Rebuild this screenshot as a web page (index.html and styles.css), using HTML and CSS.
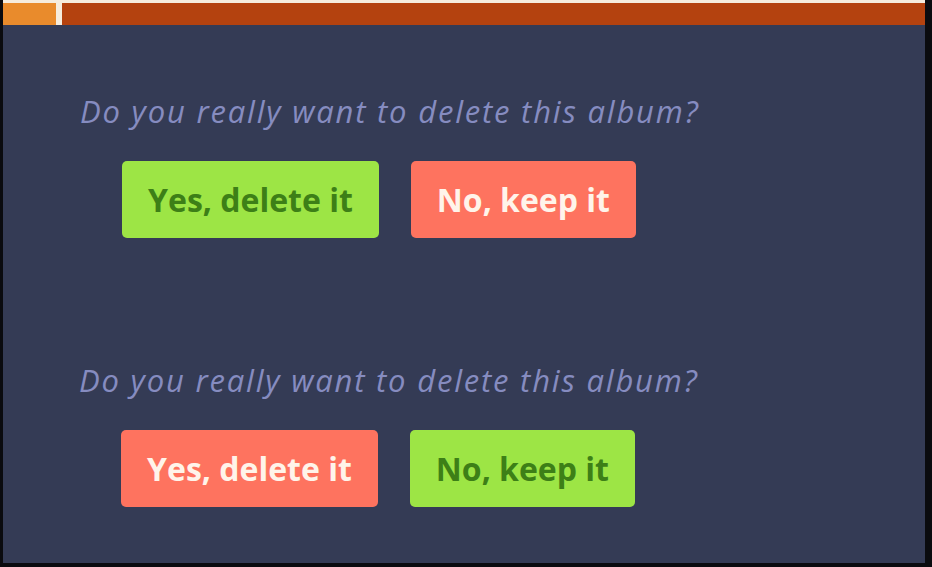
FILE: index.html
```html
<!DOCTYPE html>
<html>
<head>
<meta charset="utf-8">
<link rel="stylesheet" href="styles.css">
</head>
<body>
<div class="screen">
  <div class="topbar">
    <div class="seg seg-orange"></div>
    <div class="seg seg-brown"></div>
  </div>
  <div class="content">
    <section class="prompt">
      <h2 class="question">Do you really want to delete this album?</h2>
      <div class="actions">
        <button class="btn btn-green">Yes, delete it</button>
        <button class="btn btn-red">No, keep it</button>
      </div>
    </section>
    <section class="prompt prompt-second">
      <h2 class="question">Do you really want to delete this album?</h2>
      <div class="actions">
        <button class="btn btn-red">Yes, delete it</button>
        <button class="btn btn-green">No, keep it</button>
      </div>
    </section>
  </div>
</div>
</body>
</html>
```
FILE: styles.css
```css
html, body {
  margin: 0;
  padding: 0;
  background: #0a0b0f;
}
.screen {
  width: 922px;
  height: 563px;
  margin-left: 3px;
  background: #343b55;
  overflow: hidden;
}
.topbar {
  display: flex;
  gap: 6px;
  height: 22px;
  padding-top: 3px;
  background: #f6ecdd;
}
.seg { height: 22px; }
.seg-orange { width: 53px; background: #e98b2c; }
.seg-brown { flex: 1; background: #b4420f; }
.content {
  padding-left: 77px;
}
.prompt { padding-top: 68px; }
.prompt-second { padding-top: 124px; margin-left: -1px; }
.question {
  margin: 0;
  font-family: "Open Sans", sans-serif;
  font-style: italic;
  font-weight: 400;
  font-size: 31px;
  letter-spacing: 1.8px;
  line-height: 36px;
  color: #868cc0;
  white-space: nowrap;
}
.actions {
  display: flex;
  gap: 32px;
  margin-top: 32px;
  padding-left: 42px;
}
.btn {
  height: 77px;
  padding: 0 26px;
  border: none;
  border-radius: 5px;
  font-family: "Open Sans", sans-serif;
  font-weight: 700;
  font-size: 32px;
  line-height: 77px;
}
.btn-green { background: #9de545; color: #3d7f17; }
.btn-red { background: #fe735f; color: #fff4ea; }
```
